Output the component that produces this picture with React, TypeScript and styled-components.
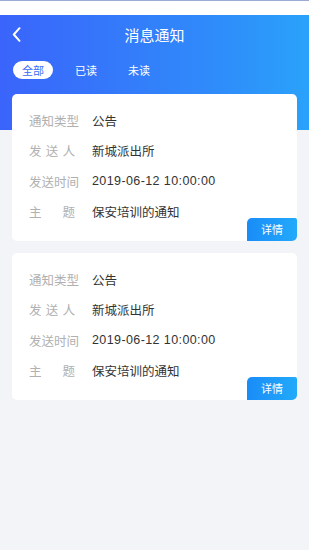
import React from "react";
import styled, { createGlobalStyle } from "styled-components";

const Global = createGlobalStyle`
  html, body { margin: 0; padding: 0; background: #f3f4f8; }
  body { font-family: "Noto Sans CJK SC", "Noto Sans", sans-serif; }
`;

const Page = styled.div`
  width: 309px;
  min-height: 550px;
  background: #f3f4f8;
  position: relative;
`;

const StatusBar = styled.div`
  height: 15px;
  background: #fff;
  border-top: 1px solid #9aaad4;
  box-sizing: border-box;
`;

const Header = styled.div`
  height: 115px;
  background: linear-gradient(90deg, #3a64fb 0%, #2f8cfa 70%, #2aa2fa 100%);
  padding: 0 12px;
  box-sizing: border-box;
`;

const NavBar = styled.div`
  height: 39px;
  display: flex;
  align-items: center;
  position: relative;
`;

const Back = styled.div`
  width: 12px;
  height: 16px;
  display: flex;
  align-items: center;
  margin-top: -1px;
`;

const Title = styled.div`
  position: absolute;
  left: 0;
  right: 0;
  text-align: center;
  color: #fff;
  font-size: 15px;
  line-height: 20px;
  pointer-events: none;
`;

const Tabs = styled.div`
  display: flex;
  gap: 13px;
  margin-top: 7px;
  padding-left: 1px;
`;

const Tab = styled.div<{ $active?: boolean }>`
  height: 18px;
  padding: 0 9px;
  border-radius: 9px;
  font-size: 11px;
  line-height: 18px;
  background: ${(p) => (p.$active ? "#fff" : "transparent")};
  color: ${(p) => (p.$active ? "#3a6cf9" : "#fff")};
`;

const List = styled.div`
  margin-top: -36px;
  padding: 0 12px;
  display: flex;
  flex-direction: column;
  gap: 12px;
`;

const Card = styled.div`
  position: relative;
  background: #fff;
  border-radius: 5px;
  padding: 11px 17px 14px;
`;

const Row = styled.div`
  height: 30.5px;
  display: flex;
  align-items: center;
  font-size: 12.5px;
`;

const Label = styled.div`
  width: 46px;
  color: #b0b0b0;
  text-align: justify;
  text-align-last: justify;
  margin-right: 17px;
  white-space: nowrap;
`;

const Value = styled.div<{ $latin?: boolean }>`
  color: #333;
  font-family: "Liberation Sans", "Noto Sans CJK SC", sans-serif;
  letter-spacing: ${(p) => (p.$latin ? "0.4px" : "0")};
`;

const DetailButton = styled.div`
  position: absolute;
  right: 0;
  bottom: 0;
  width: 50px;
  height: 23px;
  border-radius: 5px 2px 5px 0;
  background: linear-gradient(90deg, #1a8cf8 0%, #22aafa 100%);
  color: #fff;
  font-size: 11px;
  line-height: 23px;
  text-align: center;
`;

const items = [
  { type: "公告", sender: "新城派出所", time: "2019-06-12 10:00:00", subject: "保安培训的通知" },
  { type: "公告", sender: "新城派出所", time: "2019-06-12 10:00:00", subject: "保安培训的通知" },
];

export default function App() {
  return (
    <Page>
      <Global />
      <StatusBar />
      <Header>
        <NavBar>
          <Back>
            <svg width="9" height="15" viewBox="0 0 9 15">
              <path d="M7.5 1.2 L1.8 7.5 L7.5 13.8" fill="none" stroke="#fff" strokeWidth="2" strokeLinecap="round" strokeLinejoin="round" />
            </svg>
          </Back>
          <Title>消息通知</Title>
        </NavBar>
        <Tabs>
          <Tab $active>全部</Tab>
          <Tab>已读</Tab>
          <Tab>未读</Tab>
        </Tabs>
      </Header>
      <List>
        {items.map((it, i) => (
          <Card key={i}>
            <Row>
              <Label>通知类型</Label>
              <Value>{it.type}</Value>
            </Row>
            <Row>
              <Label>发送人</Label>
              <Value>{it.sender}</Value>
            </Row>
            <Row>
              <Label>发送时间</Label>
              <Value $latin>{it.time}</Value>
            </Row>
            <Row>
              <Label>主题</Label>
              <Value>{it.subject}</Value>
            </Row>
            <DetailButton>详情</DetailButton>
          </Card>
        ))}
      </List>
    </Page>
  );
}
